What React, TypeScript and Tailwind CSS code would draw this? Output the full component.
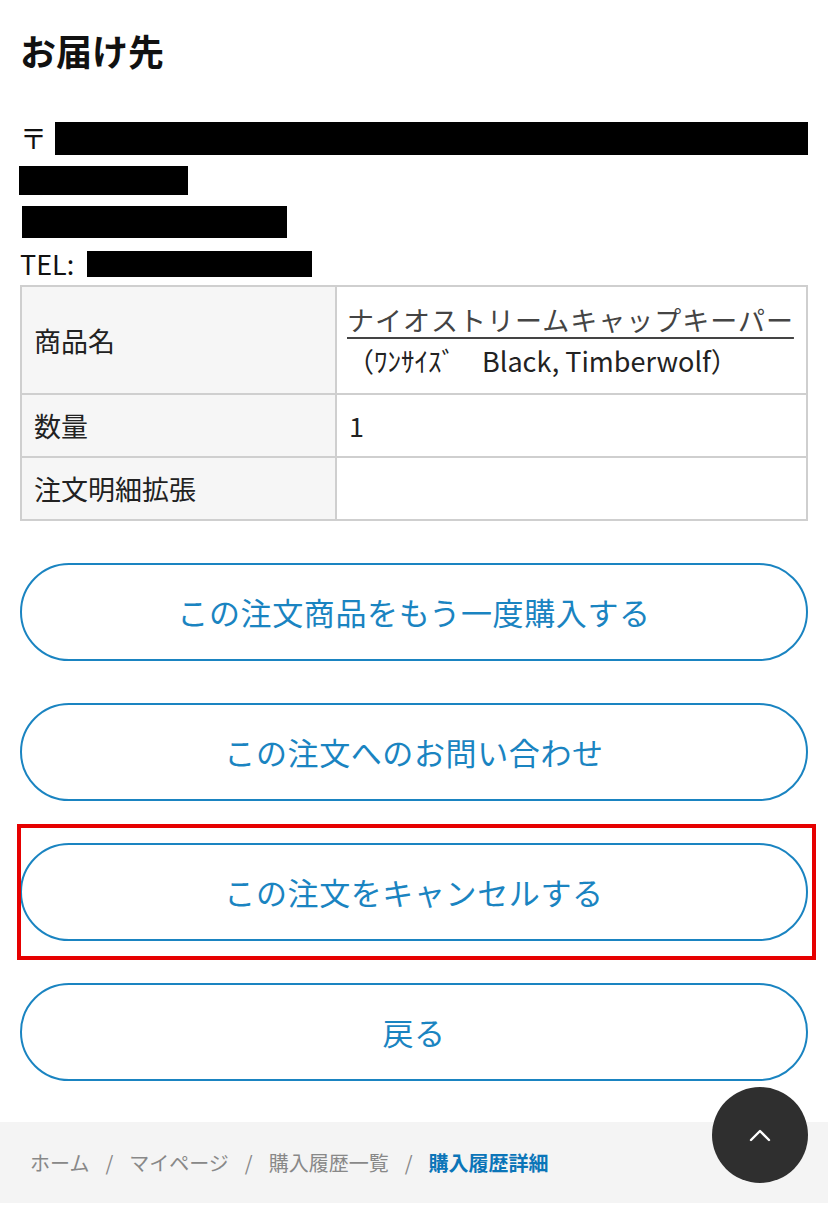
import React from 'react';

const FONT = { fontFamily: '"Noto Sans CJK JP", "Noto Sans", sans-serif' };

const Redact: React.FC<{ w: number; h: number }> = ({ w, h }) => (
  <span className="inline-block bg-black align-middle" style={{ width: w, height: h }} />
);

const PillButton: React.FC<{ label: string }> = ({ label }) => (
  <button className="w-full h-[98px] rounded-full border-2 border-[#1a84c1] bg-white text-[#1a84c1] text-[31px] tracking-[0.02em] flex items-center justify-center">
    {label}
  </button>
);

const App: React.FC = () => {
  return (
    <div className="w-[828px] min-h-[1215px] bg-white text-[#111] relative" style={FONT}>
      <div className="px-5">
        <h2 className="pt-[25px] text-[36px] leading-[50px] font-bold">お届け先</h2>

        {/* address (redacted) */}
        <div className="mt-[42px] text-[27px] leading-[42px]">
          <div className="flex items-center h-[42px]">
            <span className="w-[35px]">〒</span>
            <Redact w={753} h={33} />
          </div>
          <div className="flex items-center h-[42px] -ml-[1px]">
            <Redact w={169} h={29} />
          </div>
          <div className="flex items-center h-[42px] pl-[2px]">
            <Redact w={265} h={32} />
          </div>
          <div className="flex items-center h-[42px]">
            <span className="w-[67px]">TEL:</span>
            <Redact w={225} h={26} />
          </div>
        </div>

        {/* order item table */}
        <table className="w-[788px] border-collapse border-2 border-[#cfcfcf] text-[27px] leading-[41px] text-[#222]">
          <tbody>
            <tr>
              <th className="w-[315px] bg-[#f6f6f6] border-2 border-[#cfcfcf] text-left font-normal px-3 py-3">商品名</th>
              <td className="border-2 border-[#cfcfcf] pl-[10px] pr-3 py-3">
                <a className="underline underline-offset-[6px] decoration-[#444] text-[#444] tracking-[1px]">ナイオストリームキャップキーパー</a>
                <div className="text-[#222]">（ﾜﾝｻｲｽﾞ　Black, Timberwolf）</div>
              </td>
            </tr>
            <tr>
              <th className="bg-[#f6f6f6] border-2 border-[#cfcfcf] text-left font-normal px-3 py-[10px]">数量</th>
              <td className="border-2 border-[#cfcfcf] px-3 py-[10px]">1</td>
            </tr>
            <tr>
              <th className="bg-[#f6f6f6] border-2 border-[#cfcfcf] text-left font-normal px-3 py-[10px]">注文明細拡張</th>
              <td className="border-2 border-[#cfcfcf] px-3 py-[10px]"></td>
            </tr>
          </tbody>
        </table>

        {/* actions */}
        <div className="mt-[42px] flex flex-col gap-[42px] w-[788px]">
          <PillButton label="この注文商品をもう一度購入する" />
          <PillButton label="この注文へのお問い合わせ" />
          <div className="relative">
            <PillButton label="この注文をキャンセルする" />
            <div className="absolute -top-[19px] -left-[3px] -right-[8px] -bottom-[19px] border-4 border-[#e60000] pointer-events-none" />
          </div>
          <PillButton label="戻る" />
        </div>
      </div>

      {/* breadcrumb */}
      <nav className="mt-[41px] h-[81px] bg-[#f4f4f4] flex items-center px-[30px] text-[20px] text-[#888]">
        <span>ホーム</span>
        <span className="mx-[16px]">/</span>
        <span>マイページ</span>
        <span className="mx-[16px]">/</span>
        <span>購入履歴一覧</span>
        <span className="mx-[16px]">/</span>
        <span className="font-bold text-[#0b75b8]">購入履歴詳細</span>
      </nav>

      {/* back to top */}
      <button className="absolute left-[712px] top-[1087px] w-[96px] h-[96px] rounded-full bg-[#2f2f2f] flex items-center justify-center">
        <svg width="22" height="14" viewBox="0 0 22 14" fill="none">
          <path d="M2 12 L11 3 L20 12" stroke="#fff" strokeWidth="2.4" strokeLinecap="round" strokeLinejoin="round" />
        </svg>
      </button>
    </div>
  );
};

export default App;
